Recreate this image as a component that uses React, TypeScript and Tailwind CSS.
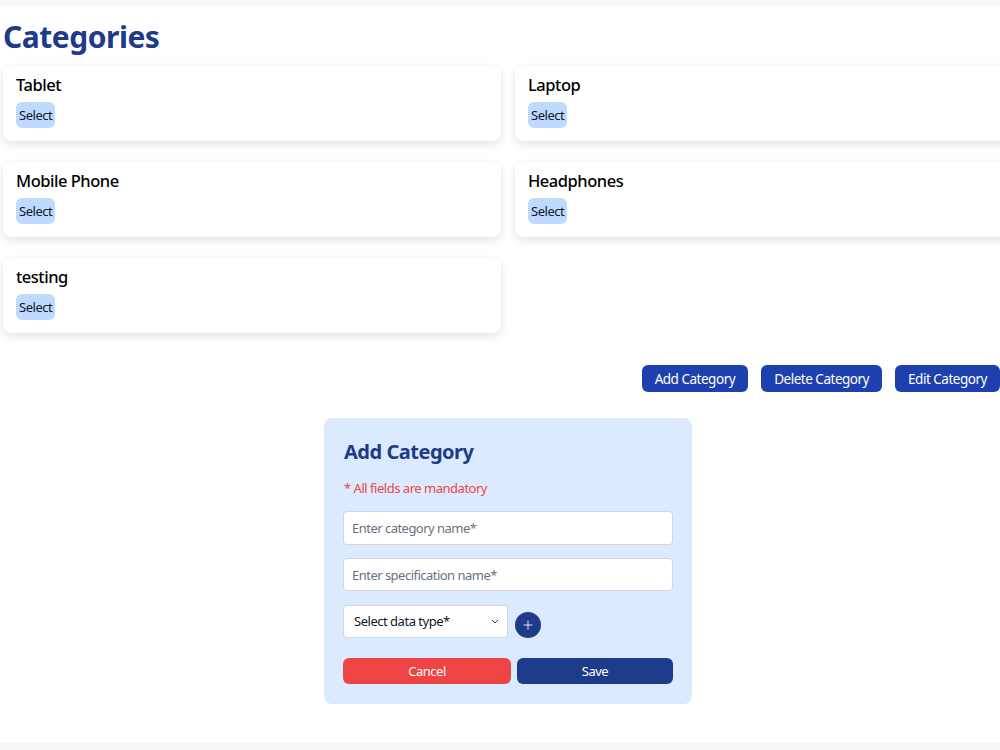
import { Plus } from "lucide-react";

const categories = ["Tablet", "Laptop", "Mobile Phone", "Headphones", "testing"];

const CategoryCard = ({ name }: { name: string }) => (
  <div className="bg-white rounded-lg shadow-[0_3px_8px_rgba(0,0,0,0.12)] px-[13px] pt-[7px] pb-[13px]">
    <h3 className="text-[16.5px] leading-6 font-medium text-black">{name}</h3>
    <button className="mt-[5px] h-[26px] px-[3px] pt-[2px] rounded-md bg-blue-200 text-[13px] text-gray-900">
      Select
    </button>
  </div>
);

export default function App() {
  return (
    <div
      className="w-full h-[750px] overflow-hidden bg-[#f7f8fa] pt-[6px] tracking-[-0.03em]"
      style={{ fontFamily: '"Noto Sans", "Open Sans", sans-serif' }}
    >
      <div className="w-[1016px] h-[737px] bg-white">
        {/* Header */}
        <h1 className="pl-[3px] pt-[13px] text-[30px] leading-9 font-bold text-[#1e3a8a]">
          Categories
        </h1>

        {/* Category grid */}
        <div className="mt-[11px] pl-[3px] grid grid-cols-[498px_498px] gap-x-[14px] gap-y-[21px]">
          {categories.map((c) => (
            <CategoryCard key={c} name={c} />
          ))}
        </div>

        {/* Actions */}
        <div className="mt-[32px] pr-[16px] flex justify-end gap-[13px]">
          <button className="h-[27px] px-[13px] pt-px rounded-md bg-[#1e40af] text-white text-[13.5px]">Add Category</button>
          <button className="h-[27px] px-[13px] pt-px rounded-md bg-[#1e40af] text-white text-[13.5px]">Delete Category</button>
          <button className="h-[27px] px-[13px] pt-px rounded-md bg-[#1e40af] text-white text-[13.5px]">Edit Category</button>
        </div>

        {/* Add category form */}
        <div className="mt-[26px] ml-[324px] w-[368px] bg-[#dbeafe] rounded-lg px-[19px] pt-[20px] pb-[20px]">
          <h2 className="pl-px text-[20px] leading-7 font-bold text-[#1e3a8a]">Add Category</h2>
          <p className="mt-[12px] pl-px text-[13px] leading-5 text-[#ef4444]">* All fields are mandatory</p>
          <input
            className="mt-[13px] w-full h-[34px] px-[8px] bg-white border border-gray-300 rounded text-[13px] tracking-[-0.04em] placeholder:text-gray-500 outline-none"
            placeholder="Enter category name*"
          />
          <input
            className="mt-[13px] w-full h-[33px] px-[8px] bg-white border border-gray-300 rounded text-[13px] tracking-[-0.04em] placeholder:text-gray-500 outline-none"
            placeholder="Enter specification name*"
          />
          <div className="mt-[14px] flex items-start gap-[7px]">
            <div className="relative w-[165px] h-[33px] bg-white border border-gray-300 rounded flex items-center pl-[10px] pt-px">
              <span className="text-[13px] text-gray-900">Select data type*</span>
              <svg className="absolute right-[8px] top-[13px]" width="8" height="5" viewBox="0 0 8 5" fill="none">
                <path d="M1 1l3 3 3-3" stroke="#374151" strokeWidth="1" />
              </svg>
            </div>
            <button className="w-[26px] h-[26px] mt-[7px] rounded-full bg-[#1e3a8a] text-white flex items-center justify-center">
              <Plus size={14} strokeWidth={1.5} />
            </button>
          </div>
          <div className="mt-[20px] flex gap-[6px]">
            <button className="w-[168px] h-[26px] pt-px rounded-md bg-[#ef4444] text-white text-[13px]">Cancel</button>
            <button className="flex-1 h-[26px] pt-px rounded-md bg-[#1e3a8a] text-white text-[13px]">Save</button>
          </div>
        </div>
      </div>
    </div>
  );
}
